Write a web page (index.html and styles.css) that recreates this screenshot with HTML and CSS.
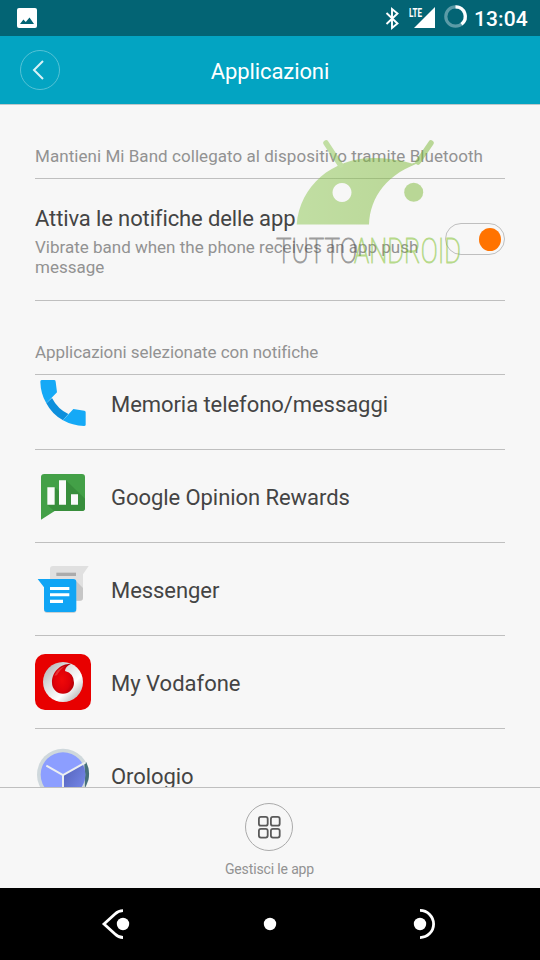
FILE: index.html
```html
<!DOCTYPE html>
<html lang="it">
<head>
<meta charset="utf-8">
<title>Applicazioni</title>
<link rel="stylesheet" href="styles.css">
</head>
<body>
<div class="screen">
  <div class="status">
    <svg class="status-photo" width="20" height="20" viewBox="0 0 20 20"><rect width="20" height="20" rx="2" fill="#fff"/><path d="M3 16l3.400-4.500 2.400 2.500 3.700-4.500L17 16z" fill="#036474"/></svg>
    <svg class="status-icons" width="100" height="36" viewBox="0 0 100 36">
      <path d="M6.500 13l11 10.500-5.500 4.500V9l5.500 4.500L6.500 24" fill="none" stroke="#fff" stroke-width="1.900"/>
      <path d="M34 28L55 7v21z" fill="#fff"/>
      <text class="lte" x="29" y="16.500" textLength="13" lengthAdjust="spacingAndGlyphs">LTE</text>
      <circle cx="75.500" cy="16.500" r="9.700" fill="none" stroke="#5b9ba7" stroke-width="3.200"/>
      <path d="M75.500 6.800A9.700 9.700 0 0 1 81.500 24.200" fill="none" stroke="#fff" stroke-width="3.200"/>
    </svg>
    <span class="clock">13:04</span>
  </div>
  <div class="header">
    <svg class="back" width="40" height="40" viewBox="0 0 40 40"><circle cx="20" cy="20" r="19.500" fill="none" stroke="#55c2d5"/><path d="M23 11l-9 9 9 9" fill="none" stroke="#d8f2f6" stroke-width="2"/></svg>
    <span class="title">Applicazioni</span>
  </div>
  <div class="content">
    <div class="hint"><span class="hint-text">Mantieni Mi Band collegato al dispositivo tramite Bluetooth</span></div>
    <div class="setting">
      <div class="setting-body">
        <div class="setting-title">Attiva le notifiche delle app</div>
        <div class="setting-sub">Vibrate band when the phone receives an app push message</div>
      </div>
      <div class="toggle"><div class="knob"></div></div>
    </div>
    <div class="section"><span class="section-text">Applicazioni selezionate con notifiche</span></div>
    <div class="list">
      <div class="row">
        <svg class="icon" viewBox="30 15 168 168">
          <path d="M64 100L81 84Q98 117 130 132L114 151Q81 133 64 100z" fill="#0d8fdc"/>
          <path d="M50 30H88Q92 30 92 35L96 67 64 100Q47 71 46 35Q46 30 50 30zM114 151L145 117 178 122Q182 122 182 127V164Q182 168 177 168Q142 167 114 151z" fill="#15a9f6"/>
        </svg>
        <span class="name">Memoria telefono/messaggi</span>
      </div>
      <div class="row">
        <svg class="icon" viewBox="30 24 168 168">
          <path d="M58 42H171Q180 42 180 51V144Q180 153 171 153H89L48 179V51Q48 42 58 42z" fill="#43a047"/>
          <path d="M123 61L180 116V144Q180 153 171 153H87L67 134 91 83 103 94z" fill="#388e3c"/>
          <path d="M67 82h22v52H67zM102 61h21v73h-21zM138 103h21v31h-21z" fill="#fafafa"/>
        </svg>
        <span class="name">Google Opinion Rewards</span>
      </div>
      <div class="row">
        <svg class="icon" viewBox="30 33 168 168">
          <path d="M84 48H191L174 73V143Q174 152 165 152H84Q75 152 75 143V57Q75 48 84 48z" fill="#e0e0e0"/>
          <path d="M154 94L174 114V143Q174 152 165 152H154z" fill="#c6c6c6"/>
          <path d="M94 68h59v10H94z" fill="#ababab"/>
          <path d="M57 180Q58 189 66 189H145Q154 189 154 180" fill="#c9d0d3"/>
          <path d="M38 87H145Q154 87 154 96V177Q154 186 145 186H66Q57 186 57 177V112z" fill="#10a5f5"/>
          <path d="M75 111h58v9H75zM75 130h58v9H75zM75 149h39v10H75z" fill="#fff"/>
        </svg>
        <span class="name">Messenger</span>
      </div>
      <div class="row">
        <svg class="icon" viewBox="30 27 168 168">
          <defs>
            <linearGradient id="silver" x1="0" y1="0" x2="1" y2="1"><stop offset="0" stop-color="#aaa"/><stop offset=".35" stop-color="#ddd"/><stop offset=".65" stop-color="#fff"/><stop offset="1" stop-color="#999"/></linearGradient>
            <radialGradient id="drop" cx=".45" cy=".55" r=".6"><stop offset="0" stop-color="#f00808"/><stop offset=".6" stop-color="#df0008"/><stop offset="1" stop-color="#a80008"/></radialGradient>
          </defs>
          <rect x="30" y="27" width="168" height="168" rx="30" fill="#e80000"/>
          <circle cx="114" cy="111" r="60" fill="url(#silver)"/>
          <path d="M139 56Q120 64 120 78Q147 85 147 113A33 33 0 0 1 81 113C80 82 104 56 139 56z" fill="url(#drop)"/>
          <path d="M88 92Q97 70 122 62Q104 74 96 91z" fill="#f08080" opacity=".4"/>
        </svg>
        <span class="name name-tight">My Vodafone</span>
      </div>
      <div class="row">
        <svg class="icon" viewBox="30 36 168 168">
          <defs><linearGradient id="shade" x1="0" y1="0" x2="1" y2="1"><stop offset="0" stop-color="#5261b8"/><stop offset="1" stop-color="#7b8df0"/></linearGradient></defs>
          <circle cx="114" cy="119" r="78" fill="#cfd8dc"/>
          <path d="M178 83L184 82A78 78 0 0 1 190 135L180 160z" fill="#47707a"/>
          <circle cx="114" cy="119" r="67" fill="#8c9eff"/>
          <path d="M114 119L172 86A67 67 0 0 1 114 186z" fill="url(#shade)"/>
          <path d="M64 92L114 120 182 82M114 119V190" fill="none" stroke="#eceff1" stroke-width="6"/>
        </svg>
        <span class="name">Orologio</span>
      </div>
    </div>
  </div>
  <div class="footer">
    <svg class="manage" width="48" height="48" viewBox="0 0 48 48"><circle cx="24" cy="24" r="23.500" fill="none" stroke="#aaa"/><g fill="none" stroke="#5a5a5a" stroke-width="1.800"><rect x="13.900" y="13.900" width="8.800" height="8.800" rx="2"/><rect x="25.900" y="13.900" width="8.800" height="8.800" rx="2"/><rect x="13.900" y="25.800" width="8.800" height="8.800" rx="2"/><rect x="25.900" y="25.800" width="8.800" height="8.800" rx="2"/></g></svg>
    <span class="manage-text">Gestisci le app</span>
  </div>
  <div class="nav">
    <svg width="540" height="72" viewBox="0 0 540 72"><g fill="#fff"><circle cx="123" cy="36" r="6.200"/><circle cx="270" cy="36" r="6.200"/><circle cx="420" cy="36" r="6.200"/></g><g fill="none" stroke="#fff" stroke-width="2.800"><path d="M123 22.700Q118.500 22.700 115 26L104 36 115 46Q118.500 49.500 123 49.500"/><path d="M420 22.400A13.600 13.600 0 0 1 420 49.600"/></g></svg>
  </div>
  <svg class="watermark" width="190" height="130" viewBox="0 0 190 130">
    <defs><linearGradient id="green"><stop offset="0" stop-color="#8cc751"/><stop offset="1" stop-color="#7db838"/></linearGradient></defs>
    <g class="robot">
      <path fill="url(#green)" fill-rule="evenodd" d="M21.700 89.500C25 51 57 23 98.500 23Q118 23 137 28.500L142 27 148 26.500C112 38 95 62 94 89.500zM67 48a9.500 9.500 0 1 0 .01 0z"/>
      <circle cx="138.700" cy="57.300" r="9.500" fill="#7db838"/>
      <path d="M51 8L65.500 30" stroke="#8cc751" stroke-width="5.500" stroke-linecap="round"/>
      <path d="M156 8L143 27" stroke="#7db838" stroke-width="5.500" stroke-linecap="round"/>
    </g>
    <g class="brand">
      <text class="mark mark-gray" x="1" y="127.800" textLength="81" lengthAdjust="spacingAndGlyphs">TUTTO</text>
      <text class="mark mark-green" x="79" y="127.800" textLength="107" lengthAdjust="spacingAndGlyphs">ANDROID</text>
    </g>
  </svg>
</div>
</body>
</html>
```
FILE: styles.css
```css
body { margin: 0; font-family: Roboto, "Liberation Sans", sans-serif; }
svg { display: block; }
.screen {
  position: relative;
  width: 540px;
  height: 960px;
  display: flex;
  flex-direction: column;
  overflow: hidden;
  background: #f7f7f7;
}
.status {
  height: 36px;
  flex: none;
  display: flex;
  align-items: center;
  background: #036474;
  color: #fff;
}
.status-photo { margin-left: 17px; }
.status-icons { margin-left: 343px; }
.lte { font-size: 12px; font-weight: 700; fill: #fff; }
.clock { margin-left: -6px; padding-top: 1px; font-size: 21px; font-weight: 500; letter-spacing: 0.1px; white-space: nowrap; }
.header {
  height: 68px;
  flex: none;
  display: grid;
  grid-template-columns: 60px 1fr 60px;
  align-items: center;
  background: #03a4c2;
  border-bottom: 1px solid #bec8ca;
}
.back { margin-left: 20px; }
.title { text-align: center; color: #fff; font-size: 22px; letter-spacing: -0.1px; padding-top: 3px; }
.content {
  flex: 1;
  min-height: 0;
  padding: 0 35px;
  display: flex;
  flex-direction: column;
  overflow: hidden;
}
.hint, .section {
  flex: none;
  display: flex;
  align-items: flex-end;
  box-sizing: border-box;
  height: 74px;
  padding-bottom: 11px;
  border-bottom: 1px solid #bfbfbf;
  color: #929292;
  font-size: 17px;
  line-height: 22px;
  white-space: nowrap;
}
.hint-text { letter-spacing: 0.05px; }
.section-text { letter-spacing: -0.06px; }
.setting {
  flex: none;
  display: flex;
  box-sizing: border-box;
  height: 122px;
  border-bottom: 1px solid #bfbfbf;
}
.setting-body { width: 410px; padding-top: 25px; }
.setting-title { color: #444; font-size: 22px; line-height: 30px; letter-spacing: -0.12px; white-space: nowrap; }
.setting-sub { width: 400px; margin-top: 3px; color: #929292; font-size: 17px; line-height: 20px; }
.toggle {
  width: 60px;
  height: 32px;
  box-sizing: border-box;
  margin-top: 44px;
  padding-right: 3px;
  display: flex;
  align-items: center;
  justify-content: flex-end;
  border: 1px solid #bfbfbf;
  border-radius: 16px;
}
.knob { width: 22px; height: 23px; border-radius: 50%; background: #ff7300; }
.list { flex: 1; min-height: 0; overflow: hidden; }
.row {
  height: 92px;
  display: flex;
  align-items: center;
  gap: 20px;
  border-bottom: 1px solid #bfbfbf;
}
.row:first-child { margin-top: -18px; }
.icon { width: 56px; height: 56px; flex: none; }
.name { padding-top: 3px; color: #444; font-size: 22px; letter-spacing: -0.06px; white-space: nowrap; }
.name-tight { letter-spacing: 0; }
.footer {
  flex: none;
  height: 100px;
  display: flex;
  flex-direction: column;
  align-items: center;
  border-top: 1px solid #bfbfbf;
}
.manage { margin: 15px 2px 0 0; }
.manage-text { margin: 9px 1px 0 0; color: #929292; font-size: 14px; line-height: 18px; letter-spacing: -0.14px; }
.nav { height: 72px; flex: none; background: #000; }
.watermark { position: absolute; left: 275px; top: 135px; }
.robot, .brand { opacity: 0.5; }
.mark { font-size: 35px; font-weight: 100; stroke-width: 0.9px; }
.mark-gray { fill: #444; stroke: #444; }
.mark-green { fill: #78be20; stroke: #78be20; }
```
